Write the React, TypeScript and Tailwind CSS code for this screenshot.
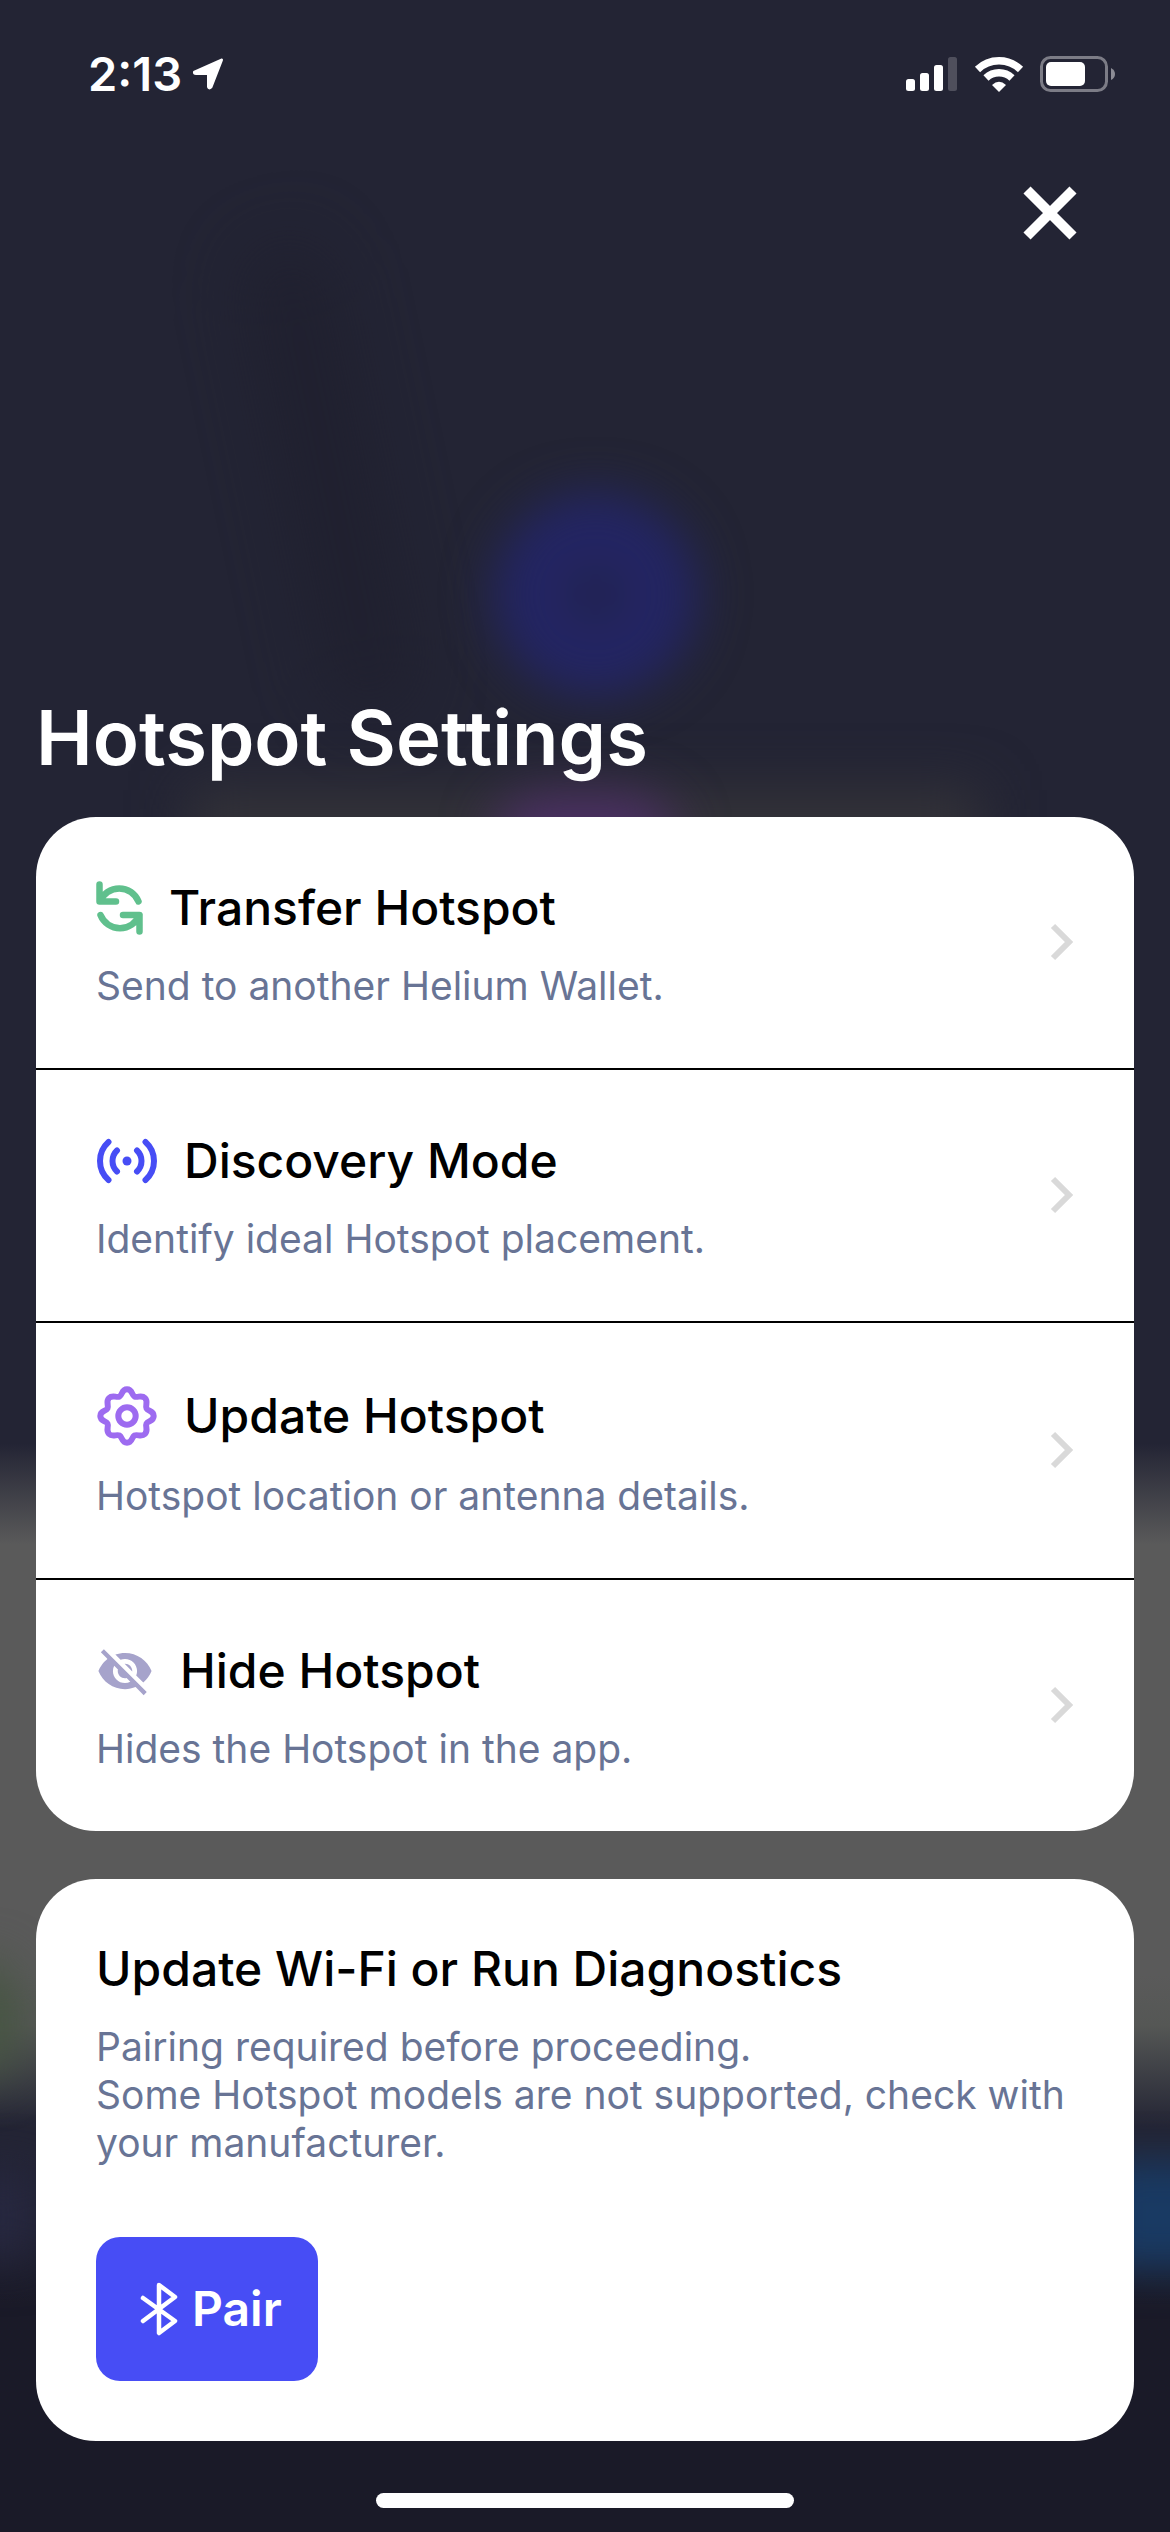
import React from "react";
import { MdVisibilityOff } from "react-icons/md";

function TransferIcon() {
  return (
    <svg className="h-[54px] w-[47px]" viewBox="0 0 47 54" fill="none" stroke="#60C08D" strokeWidth="6.5" strokeLinecap="round" strokeLinejoin="round" aria-hidden="true">
      <path d="M3.500 3.500V20.500H20M4 20.500A20.700 20.700 0 0 1 42.500 20.500" />
      <path d="M43.500 50.500V34H27M43.500 34A21 21 0 0 1 4.500 34" />
    </svg>
  );
}

function DiscoveryIcon() {
  return (
    <svg className="h-[46px] w-[62px]" viewBox="0 0 62 46" fill="none" stroke="#474DF5" strokeWidth="6" strokeLinecap="round" aria-hidden="true">
      <path d="M12.500 4a25.500 25.500 0 0 0 0 38M49.500 4a25.500 25.500 0 0 1 0 38M21 12.500a14.500 14.500 0 0 0 0 21M41 12.500a14.500 14.500 0 0 1 0 21" />
      <circle cx="31" cy="23" r="4.500" fill="#474DF5" stroke="none" />
    </svg>
  );
}

function GearIcon() {
  return (
    <svg className="h-[72px] w-[62px]" viewBox="0 -5 62 72" fill="none" stroke="#9D6BF0" strokeWidth="6" strokeLinejoin="round" aria-hidden="true">
      <path d="M31 4.300C36.500 4.300 35.500 10 38.500 11.500C41.500 13 45.500 9.500 49 13C52.500 16.500 49 20.500 50.500 23.500C52 26.500 57.700 25.500 57.700 31C57.700 36.500 52 35.500 50.500 38.500C49 41.500 52.500 45.500 49 49C45.500 52.500 41.500 49 38.500 50.500C35.500 52 36.500 57.700 31 57.700C25.500 57.700 26.500 52 23.500 50.500C20.500 49 16.500 52.500 13 49C9.500 45.500 13 41.500 11.500 38.500C10 35.500 4.300 36.500 4.300 31C4.300 25.500 10 26.500 11.500 23.500C13 20.500 9.500 16.500 13 13C16.500 9.500 20.500 13 23.500 11.500C26.500 10 25.500 4.300 31 4.300Z" />
      <circle cx="31" cy="31" r="8.700" />
    </svg>
  );
}

const rows = [
  { title: "Transfer Hotspot", text: "Send to another Helium Wallet.", icon: <TransferIcon /> },
  { title: "Discovery Mode", text: "Identify ideal Hotspot placement.", icon: <DiscoveryIcon /> },
  { title: "Update Hotspot", text: "Hotspot location or antenna details.", icon: <GearIcon /> },
  { title: "Hide Hotspot", text: "Hides the Hotspot in the app.", icon: <MdVisibilityOff className="h-[58px] w-[58px] text-[#A6A3CB]" aria-hidden="true" /> },
];

function Backdrop() {
  return (
    <div className="absolute inset-0 -z-10 overflow-hidden bg-[linear-gradient(to_bottom,#232434_0%,#232434_57%,#5a5a5a_61%,#5a5a5a_78%,#555755_80%,#232434_84%,#232434_85%,#1a1a28_91%,#1a1a28_100%)]" aria-hidden="true">
      <div className="absolute top-[240px] left-[290px] h-[480px] w-[80px] -rotate-12 rounded-full bg-[#1e1e2c] opacity-70 blur-[36px]" />
      <div className="absolute top-[492px] left-1/2 ml-[-92px] h-[205px] w-[205px] rounded-full border-[70px] border-[#232564] bg-[#22224f] blur-[24px]" />
      <div className="absolute top-[790px] right-[190px] left-[190px] h-[80px] bg-[#343338] blur-[28px]" />
      <div className="absolute top-[795px] left-1/2 ml-[-90px] h-[90px] w-[180px] rounded-full bg-[#4c2f66] blur-[26px]" />
      <div className="absolute top-[1960px] left-[-60px] h-[120px] w-[80px] rounded-full bg-[#465542] blur-[24px]" />
      <div className="absolute top-[2170px] left-[-60px] h-[90px] w-[100px] bg-[#272840] blur-[24px]" />
      <div className="absolute top-[2160px] right-[-50px] h-[110px] w-[120px] bg-[#193a63] blur-[20px]" />
    </div>
  );
}

function StatusBar() {
  return (
    <header className="flex h-[148px] items-center justify-between pr-[54px] pl-[88px] text-white">
      <div className="flex items-center gap-[10px]">
        <time className="text-[47px] leading-[56px] font-semibold">2:13</time>
        <svg className="h-[32px] w-[32px]" viewBox="0 0 32 32" fill="#fff" stroke="#fff" strokeWidth="3" strokeLinejoin="round" aria-label="Location in use">
          <path d="M29.500 2L2.500 14Q2 15.500 4 15.500H16.500V29Q17 31 19 29Z" />
        </svg>
      </div>
      <div className="flex items-center gap-[16px]">
        <svg className="h-[36px] w-[52px]" viewBox="0 0 52 36" fill="#fff" aria-label="Signal">
          <rect x="0" y="23" width="9" height="12" rx="2.500" />
          <rect x="14" y="17" width="9" height="18" rx="2.500" />
          <rect x="28" y="9" width="9" height="26" rx="2.500" />
          <rect x="42" y="1" width="9" height="34" rx="2.500" opacity="0.200" />
        </svg>
        <svg className="h-[36px] w-[50px]" viewBox="0 0 50 36" fill="none" stroke="#fff" strokeWidth="7.500" aria-label="Wi-Fi">
          <path d="M3.500 13.500a31 31 0 0 1 43 0M12 22a19 19 0 0 1 26 0" />
          <path d="M25 36L18 29Q25 22.500 32 29Z" fill="#fff" stroke="none" />
        </svg>
        <svg className="h-[36px] w-[76px]" viewBox="0 0 76 36" fill="none" aria-label="Battery">
          <rect x="1.500" y="1.500" width="65" height="33" rx="9" stroke="#7c7c86" strokeWidth="3" />
          <rect x="6" y="6" width="39" height="24" rx="5" fill="#fff" />
          <path d="M71 12Q75 14 75 18T71 24Z" fill="#8c8c95" />
        </svg>
      </div>
    </header>
  );
}

export default function App() {
  return (
    <div className="relative isolate flex min-h-screen flex-col font-['Inter',sans-serif]">
      <Backdrop />
      <StatusBar />
      <div className="flex justify-end pr-[80px]">
        <button type="button" aria-label="Close" className="p-[12px] pt-[37px]">
          <svg className="h-[56px] w-[56px]" viewBox="0 0 56 56" stroke="#fff" strokeWidth="10" aria-hidden="true">
            <path d="M5 5L51 51M51 5L5 51" />
          </svg>
        </button>
      </div>
      <main className="mt-auto px-[36px]">
        <h1 className="mb-[32px] text-[76px] leading-[96px] font-semibold text-white">Hotspot Settings</h1>
        <nav className="divide-y-2 divide-black overflow-hidden rounded-[60px] bg-white">
          {rows.map((row) => (
            <button key={row.title} type="button" className="flex w-full items-center justify-between px-[60px] pt-[57px] pb-[58px] text-left">
              <span className="flex flex-col gap-[20px]">
                <span className="flex min-h-[68px] items-center gap-[26px]">
                  {row.icon}
                  <span className="text-[48px] leading-[60px] font-medium text-black">{row.title}</span>
                </span>
                <span className="text-[39px] leading-[48px] text-[#687495]">{row.text}</span>
              </span>
              <svg className="h-[38px] w-[24px]" viewBox="0 0 24 38" fill="none" stroke="#d9d9d9" strokeWidth="6" aria-hidden="true">
                <path d="M3 3l16 16L3 35" />
              </svg>
            </button>
          ))}
        </nav>
        <section className="mt-[48px] rounded-[60px] bg-white p-[60px]">
          <h2 className="text-[48px] leading-[60px] font-medium text-black">Update Wi-Fi or Run Diagnostics</h2>
          <p className="mt-[24px] text-[39px] leading-[48px] text-[#687495]">
            Pairing required before proceeding.
            <br />
            Some Hotspot models are not supported, check with your manufacturer.
          </p>
          <button type="button" className="mt-[70px] flex h-[144px] items-center gap-[14px] rounded-[24px] bg-[#474DF5] pr-[36px] pl-[44px] text-[48px] font-semibold text-white">
            <svg className="h-[54px] w-[38px]" viewBox="0 0 38 54" fill="none" stroke="#fff" strokeWidth="4.500" strokeLinecap="round" strokeLinejoin="round" aria-hidden="true">
              <path d="M3 16L35 39L19 51V3L35 15L3 39" />
            </svg>
            Pair
          </button>
        </section>
      </main>
      <div className="mx-auto mt-[52px] mb-[24px] h-[15px] w-[418px] rounded-full bg-white" />
    </div>
  );
}
